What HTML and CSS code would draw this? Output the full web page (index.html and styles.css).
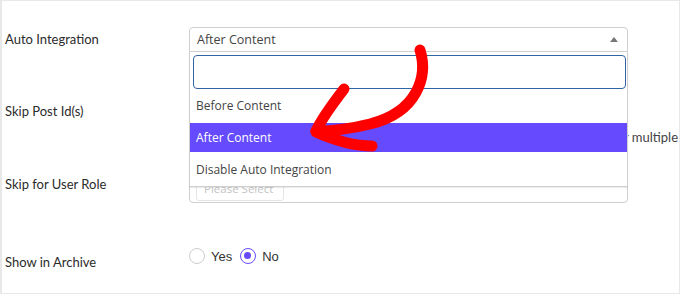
FILE: index.html
```html
<!DOCTYPE html>
<html lang="en">
<head>
  <meta charset="UTF-8" />
  <title>Auto Integration Settings</title>
  <link rel="stylesheet" href="styles.css">
</head>
<body>

  <div class="settings">

    <div class="row row-integration">
      <div class="label">Auto Integration</div>
      <div class="select-wrap">
        <div class="select-box">
          <span class="select-value">After Content</span>
          <span class="select-caret"></span>
        </div>
        <div class="dropdown">
          <div class="dropdown-search"></div>
          <div class="option first">Before Content</div>
          <div class="option active">After Content</div>
          <div class="option">Disable Auto Integration</div>
        </div>
      </div>
    </div>

    <div class="row row-skip-post">
      <div class="label">Skip Post Id(s)</div>
      <div class="field">
        <div class="text-input"></div>
        <div class="field-desc">Add post ids separated by comma for multiple</div>
      </div>
    </div>

    <div class="row row-role">
      <div class="label">Skip for User Role</div>
      <div class="multi-select">
        <div class="multi-search">Please Select</div>
      </div>
    </div>

    <div class="row row-archive">
      <div class="label">Show in Archive</div>
      <div class="radios">
        <label class="radio"><span class="radio-dot"></span>Yes</label>
        <label class="radio checked"><span class="radio-dot"></span>No</label>
      </div>
    </div>

  </div>

  <!-- hand drawn arrow pointing at the selected option -->
  <svg class="annotation" viewBox="0 0 680 295" width="680" height="295">
    <g fill="none" stroke="#ff0000" stroke-width="11" stroke-linecap="round" stroke-linejoin="round">
      <path d="M420 50 C 428 76, 418 112, 370 124 C 350 129, 332 131, 316 131" />
      <path d="M344 89 C 334 102, 322 118, 316 131" />
      <path d="M316 132 C 334 140, 352 146, 372 146" />
    </g>
  </svg>

</body>
</html>
```

FILE: styles.css
```css
body {
  margin: 0;
  padding: 0;
  background: #fff;
  font-family: 'Lato', 'Noto Sans', sans-serif;
  color: #2b2b2b;
}

.settings {
  position: relative;
  box-sizing: border-box;
  width: 680px;
  height: 294px;
  border: 1px solid #e8e8e8;
  border-left-width: 2px;
  padding: 26px 0 0 3px;
  overflow: hidden;
}

.row {
  display: grid;
  grid-template-columns: 184px 1fr;
  align-items: start;
}

.label {
  font-size: 13px;
  line-height: 25px;
  white-space: nowrap;
}

/* auto integration select */
.row-integration {
  position: relative;
  z-index: 2;
}

.select-wrap {
  position: relative;
  width: 439px;
}

.select-box {
  box-sizing: border-box;
  height: 25px;
  border: 1px solid #cfcfcf;
  border-radius: 4px 4px 0 0;
  display: flex;
  align-items: center;
  justify-content: space-between;
  padding: 0 9px 0 7px;
  font-family: 'Open Sans', sans-serif;
  font-size: 12.5px;
  color: #444;
}

.select-caret {
  width: 0;
  height: 0;
  border-left: 4px solid transparent;
  border-right: 4px solid transparent;
  border-bottom: 5px solid #777;
  margin-top: -1px;
}

.dropdown {
  position: absolute;
  top: 100%;
  left: 0;
  box-sizing: border-box;
  width: 439px;
  background: #fff;
  border: 1px solid #cfcfcf;
  border-top: none;
  box-shadow: 0 1px 1px rgba(0,0,0,0.08);
}

.dropdown-search {
  box-sizing: border-box;
  height: 34px;
  margin: 3px 1px 0 3px;
  border: 1.5px solid #3164a4;
  border-radius: 4px;
}

.option {
  height: 32px;
  line-height: 32px;
  padding-left: 6px;
  font-family: 'Open Sans', sans-serif;
  font-size: 12px;
  color: #444;
}

.option.first {
  margin-top: 1px;
}

.option.active {
  height: 29px;
  line-height: 29px;
  margin: 1px 0 2px;
  background: #654bfd;
  color: #fff;
}

/* skip post ids */
.row-skip-post {
  margin-top: 44px;
}

.row-skip-post .label {
  line-height: 30px;
}

.text-input {
  box-sizing: border-box;
  width: 439px;
  height: 30px;
  border: 1px solid #cfcfcf;
  border-radius: 4px;
}

.field-desc {
  margin-top: 2px;
  height: 18px;
  line-height: 18px;
  text-align: right;
  white-space: nowrap;
  font-size: 13px;
  color: #444;
  padding-right: 1px;
}

/* user role */
.row-role {
  margin-top: 23px;
}

.row-role .label {
  line-height: 30px;
}

.multi-select {
  box-sizing: border-box;
  width: 439px;
  height: 34px;
  border: 1px solid #cfcfcf;
  border-radius: 4px;
  padding: 10px 0 0 6px;
}

.multi-search {
  box-sizing: border-box;
  width: 88px;
  height: 21px;
  border: 1px solid #e4e4e4;
  border-radius: 3px;
  padding-left: 7px;
  font-family: 'Open Sans', sans-serif;
  font-size: 11.5px;
  line-height: 15px;
  color: #c4c4c4;
}

/* show in archive */
.row-archive {
  margin-top: 44px;
}

.row-archive .label {
  line-height: 30px;
}

.radios {
  display: flex;
  gap: 8px;
  margin-top: -2px;
}

.radio {
  display: flex;
  align-items: center;
  gap: 6px;
  height: 22px;
  font-family: 'Liberation Sans', Arial, sans-serif;
  font-size: 13px;
  color: #333;
}

.radio-dot {
  box-sizing: border-box;
  width: 16px;
  height: 16px;
  border-radius: 50%;
  border: 1px solid #cdcdcd;
  position: relative;
}

.radio.checked .radio-dot {
  border: 1.5px solid #654bfd;
}

.radio.checked .radio-dot::after {
  content: "";
  position: absolute;
  top: 3px;
  left: 3px;
  width: 7px;
  height: 7px;
  border-radius: 50%;
  background: #654bfd;
}

.annotation {
  position: absolute;
  top: 0;
  left: 0;
  pointer-events: none;
  z-index: 5;
}
```
